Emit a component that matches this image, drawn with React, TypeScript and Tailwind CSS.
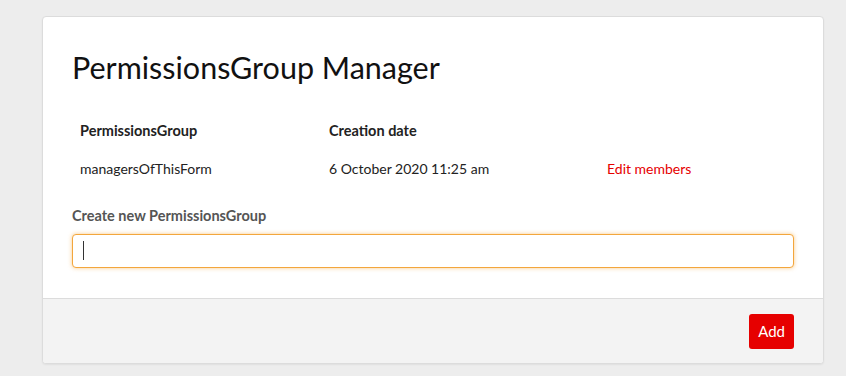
export default function App() {
  return (
    <div className="min-h-[376px] w-full bg-[#ededed] px-[42px] pt-[16px] font-['Lato',sans-serif] text-[#222]">
      <div className="w-[782px] overflow-hidden rounded-[4px] border border-[#dcdcdc] bg-white shadow-[0_1px_2px_rgba(0,0,0,0.06)]">
        <div className="px-[29px] pb-[30px] pt-[30px]">
          <h1 className="text-[30.5px] leading-[40px] text-[#111]">PermissionsGroup Manager</h1>

          <table className="mt-[33px] w-full text-left text-[14px]">
            <thead>
              <tr>
                <th className="w-[249px] px-[8px] pb-[12px] text-[14.5px] font-bold">PermissionsGroup</th>
                <th className="w-[278px] px-[8px] pb-[12px] text-[14.5px] font-bold">Creation date</th>
                <th className="px-[8px] pb-[12px]"></th>
              </tr>
            </thead>
            <tbody>
              <tr>
                <td className="px-[8px] py-[4px]">managersOfThisForm</td>
                <td className="px-[8px] py-[4px]">6 October 2020 11:25 am</td>
                <td className="px-[8px] py-[4px] text-[#e60000]">Edit members</td>
              </tr>
            </tbody>
          </table>

          <label className="mt-[22px] block text-[14.5px] font-bold text-[#555]">Create new PermissionsGroup</label>
          <div className="mt-[7px] flex h-[34px] items-center rounded-[4px] border border-[#f3a63c] bg-white px-[10px] shadow-[0_0_4px_rgba(243,166,60,0.6)]">
            <span className="h-[19px] w-px bg-[#333]"></span>
          </div>
        </div>
        <div className="flex h-[65px] justify-end border-t border-[#dcdcdc] bg-[#f3f3f3] px-[29px] pt-[15px]">
          <button className="h-[35px] rounded-[3px] bg-[#e60000] px-[9px] text-[15px] text-white">Add</button>
        </div>
      </div>
    </div>
  );
}
